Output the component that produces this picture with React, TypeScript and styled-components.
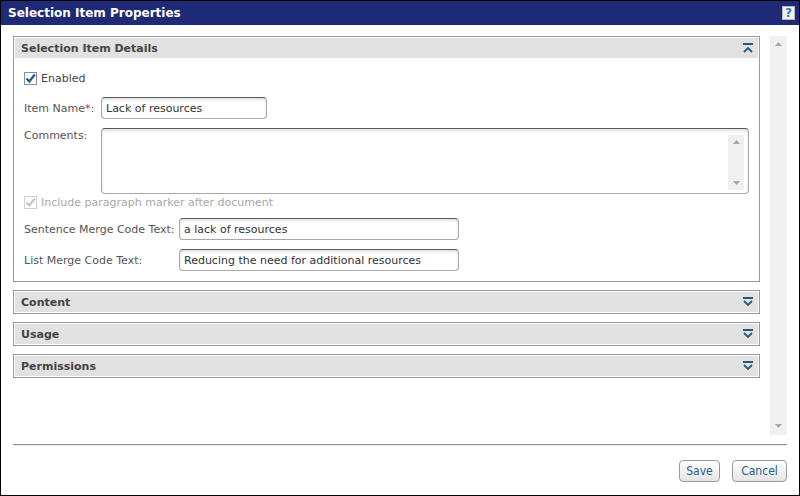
import React from 'react';
import styled, { createGlobalStyle } from 'styled-components';

const GlobalStyle = createGlobalStyle`
  html, body {
    margin: 0;
    padding: 0;
    background: #fff;
  }
  * {
    box-sizing: border-box;
  }
`;

const Window = styled.div`
  width: 800px;
  height: 496px;
  border: 1px solid #000;
  display: flex;
  flex-direction: column;
  font-family: 'DejaVu Sans', Verdana, sans-serif;
  font-size: 11px;
  color: #555;
  background: #fff;
`;

const TitleBar = styled.div`
  height: 24px;
  background: #1e2a76;
  display: flex;
  align-items: center;
  justify-content: space-between;
  padding: 0 4px 0 7px;
`;

const Title = styled.div`
  color: #fff;
  font-weight: bold;
  font-size: 12px;
`;

const HelpButton = styled.div`
  width: 13px;
  height: 14px;
  background: #f3f3f3;
  border: 1px solid #b8b8b8;
  color: #2b7bbd;
  font-weight: bold;
  font-size: 12px;
  line-height: 12px;
  text-align: center;
`;

const Body = styled.div`
  flex: 1;
  display: flex;
  flex-direction: column;
  padding: 11px 12px 0 12px;
`;

const ScrollArea = styled.div`
  height: 399px;
  display: flex;
  gap: 10px;
`;

const Panels = styled.div`
  flex: 1;
  display: flex;
  flex-direction: column;
  gap: 8px;
`;

const Section = styled.div`
  border: 1px solid #9a9a9a;
`;

const SectionHeader = styled.div`
  height: 22px;
  background: #e1e1e1;
  box-shadow: inset 0 0 0 1px #fff;
  display: flex;
  align-items: center;
  justify-content: space-between;
  padding: 0 6px 0 7px;
`;

const SectionTitle = styled.div`
  font-weight: bold;
  font-size: 11px;
  color: #444;
`;

const SectionBody = styled.div`
  padding: 13px 10px 10px 10px;
  display: flex;
  flex-direction: column;
`;

const CheckRow = styled.label<{ $disabled?: boolean; $gap: number }>`
  display: flex;
  align-items: center;
  gap: 4px;
  height: 13px;
  margin-bottom: ${(p) => p.$gap}px;
  color: ${(p) => (p.$disabled ? '#a8a8a8' : '#444')};
`;

const Box = styled.span<{ $disabled?: boolean }>`
  width: 13px;
  height: 13px;
  border: 1px solid ${(p) => (p.$disabled ? '#cfcfcf' : '#8e8e8e')};
  background: #fff;
  display: flex;
  align-items: center;
  justify-content: center;
`;

const FieldRow = styled.div<{ $gap: number; $top?: boolean }>`
  display: flex;
  align-items: ${(p) => (p.$top ? 'flex-start' : 'center')};
  margin-bottom: ${(p) => p.$gap}px;
`;

const Label = styled.div<{ $width: number; $top?: boolean }>`
  width: ${(p) => p.$width}px;
  flex-shrink: 0;
  padding-top: ${(p) => (p.$top ? 1 : 0)}px;
`;

const Required = styled.span`
  color: #d0202a;
`;

const TextInput = styled.div<{ $width: number }>`
  width: ${(p) => p.$width}px;
  height: 22px;
  border: 1px solid #a8a8a8;
  border-top-color: #5a5a5a;
  border-radius: 4px;
  box-shadow: inset 0 2px 3px rgba(0, 0, 0, 0.12);
  padding: 0 4px;
  display: flex;
  align-items: center;
  color: #333;
  background: #fff;
`;

const TextArea = styled.div`
  flex: 1;
  height: 66px;
  border: 1px solid #a8a8a8;
  border-top-color: #5a5a5a;
  border-radius: 4px;
  box-shadow: inset 0 2px 3px rgba(0, 0, 0, 0.12);
  display: flex;
  justify-content: flex-end;
  padding: 6px 4px 3px 0;
  background: #fff;
`;

const InnerScroll = styled.div`
  width: 16px;
  background: #f0f0f0;
  display: flex;
  flex-direction: column;
  justify-content: space-between;
  align-items: center;
  padding: 5px 0;
`;

const Scrollbar = styled.div`
  width: 17px;
  background: #f0f0f0;
  display: flex;
  flex-direction: column;
  justify-content: space-between;
  align-items: center;
  padding: 6px 0 7px;
`;

const Separator = styled.div`
  margin-top: 9px;
  height: 2px;
  border-top: 1px solid #999;
  border-bottom: 1px solid #e4e4e4;
`;

const Footer = styled.div`
  display: flex;
  justify-content: flex-end;
  gap: 12px;
  padding-top: 14px;
`;

const Button = styled.button<{ $width: number }>`
  width: ${(p) => p.$width}px;
  height: 22px;
  padding: 0;
  border: 1px solid #9a9a9a;
  border-radius: 4px;
  background: linear-gradient(#ffffff, #e4e4e4);
  color: #28608f;
  font-family: 'DejaVu Sans Condensed', 'DejaVu Sans', sans-serif;
  font-size: 12px;
`;

const Arrow: React.FC<{ up?: boolean }> = ({ up }) => (
  <svg width="7" height="4" viewBox="0 0 7 4">
    <path d={up ? 'M0 4 L3.5 0 L7 4 Z' : 'M0 0 L3.5 4 L7 0 Z'} fill="#a6a6a6" />
  </svg>
);

const ToggleIcon: React.FC<{ open?: boolean }> = ({ open }) => (
  <svg width="10" height="10" viewBox="0 0 10 10">
    <rect x="0" y="0" width="10" height="2" fill="#24597f" />
    <path
      d={open ? 'M1 9 L5 5 L9 9' : 'M1 4 L5 8 L9 4'}
      stroke="#24597f"
      strokeWidth="1.8"
      fill="none"
    />
  </svg>
);

const Check: React.FC<{ disabled?: boolean }> = ({ disabled }) => (
  <svg width="11" height="11" viewBox="0 0 11 11">
    <path
      d="M1.5 5.5 L4.3 8.5 L9.8 1.5"
      stroke={disabled ? '#b9cbd9' : '#1f5b86'}
      strokeWidth="2.2"
      fill="none"
    />
  </svg>
);

const collapsed = ['Content', 'Usage', 'Permissions'];

export default function App() {
  return (
    <>
      <GlobalStyle />
      <Window>
        <TitleBar>
          <Title>Selection Item Properties</Title>
          <HelpButton>?</HelpButton>
        </TitleBar>
        <Body>
          <ScrollArea>
            <Panels>
              <Section>
                <SectionHeader>
                  <SectionTitle>Selection Item Details</SectionTitle>
                  <ToggleIcon open />
                </SectionHeader>
                <SectionBody>
                  <CheckRow $gap={12}>
                    <Box>
                      <Check />
                    </Box>
                    Enabled
                  </CheckRow>
                  <FieldRow $gap={9}>
                    <Label $width={77}>
                      Item Name<Required>*</Required>:
                    </Label>
                    <TextInput $width={166}>Lack of resources</TextInput>
                  </FieldRow>
                  <FieldRow $gap={2} $top>
                    <Label $width={77} $top>
                      Comments:
                    </Label>
                    <TextArea>
                      <InnerScroll>
                        <Arrow up />
                        <Arrow />
                      </InnerScroll>
                    </TextArea>
                  </FieldRow>
                  <CheckRow $gap={9} $disabled>
                    <Box $disabled>
                      <Check disabled />
                    </Box>
                    Include paragraph marker after document
                  </CheckRow>
                  <FieldRow $gap={9}>
                    <Label $width={155}>Sentence Merge Code Text:</Label>
                    <TextInput $width={280}>a lack of resources</TextInput>
                  </FieldRow>
                  <FieldRow $gap={0}>
                    <Label $width={155}>List Merge Code Text:</Label>
                    <TextInput $width={280}>Reducing the need for additional resources</TextInput>
                  </FieldRow>
                </SectionBody>
              </Section>
              {collapsed.map((name) => (
                <Section key={name}>
                  <SectionHeader>
                    <SectionTitle>{name}</SectionTitle>
                    <ToggleIcon />
                  </SectionHeader>
                </Section>
              ))}
            </Panels>
            <Scrollbar>
              <Arrow up />
              <Arrow />
            </Scrollbar>
          </ScrollArea>
          <Separator />
          <Footer>
            <Button $width={41}>Save</Button>
            <Button $width={55}>Cancel</Button>
          </Footer>
        </Body>
      </Window>
    </>
  );
}
